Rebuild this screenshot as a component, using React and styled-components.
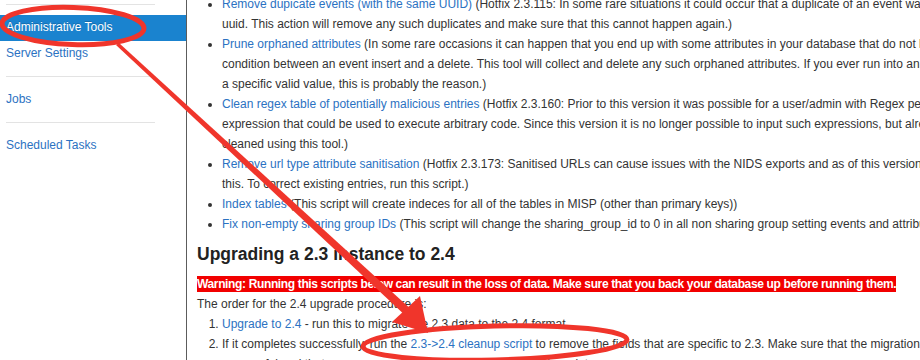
import React from "react"
import styled, { createGlobalStyle } from "styled-components"

const GlobalStyle = createGlobalStyle`
  html, body {
    margin: 0;
    padding: 0;
    background: #fff;
  }
  body {
    font-family: "Liberation Sans", Arial, Helvetica, sans-serif;
    font-size: 12px;
    line-height: 20px;
    color: #333;
  }
`

const Page = styled.div`
  position: relative;
  width: 920px;
  height: 360px;
  overflow: hidden;
  display: flex;
`

const Sidebar = styled.nav`
  flex: 0 0 186px;
  border-right: 1px solid #5c5c5c;
  padding-top: 4px;
`

const Divider = styled.div`
  height: 1px;
  background: #e3e3e3;
  margin: 10px 31px 10px 6px;
  &:first-child {
    margin-top: 0;
  }
`

const NavItem = styled.a`
  display: block;
  padding: 4px 6px ${(p) => (p.$active ? "5px" : "4px")};
  line-height: 17px;
  font-size: 12px;
  text-decoration: none;
  color: ${(p) => (p.$active ? "#fff" : "#2b72c2")};
  background: ${(p) => (p.$active ? "#1a83cf" : "transparent")};
  text-shadow: ${(p) => (p.$active ? "0 -1px 0 rgba(0,0,0,0.2)" : "none")};
`

const Content = styled.main`
  flex: 1;
  min-width: 0;
  padding-left: 10px;
  white-space: nowrap;
  overflow: hidden;
`

const ToolList = styled.ul`
  margin: -6px 0 10px 25px;
  padding: 0;
  list-style: disc;
`

const Link = styled.a`
  color: #2b72c2;
  text-decoration: none;
`

const Heading = styled.h3`
  margin: 0 0 10px;
  font-size: 17.5px;
  line-height: 20px;
  font-weight: bold;
  color: #222;
`

const Notice = styled.p`
  margin: 0;
`

const Warning = styled.span`
  background: #f20000;
  color: #fff;
  font-weight: bold;
  letter-spacing: -0.36px;
  padding: 1px 0;
`

const Steps = styled.ol`
  margin: 0 0 10px 25px;
  padding: 0;
`

const Overlay = styled.svg`
  position: absolute;
  left: 0;
  top: 0;
  pointer-events: none;
`

function Annotations() {
  return (
    <Overlay width="920" height="360" viewBox="0 0 920 360">
      <g fill="none" stroke="#f0352b" strokeWidth="5" strokeLinecap="round">
        <ellipse cx="73" cy="26" rx="71" ry="18.5" transform="rotate(2 73 26)" />
        <ellipse cx="495" cy="343" rx="132" ry="17" transform="rotate(-1.5 495 343)" />
      </g>
      <path d="M116 45 L119 43 L414 312 L408 318 Z" fill="#f0352b" />
      <path d="M428 333 L392 322 L420 296 Z" fill="#f0352b" />
    </Overlay>
  )
}

export default function App() {
  return (
    <>
      <GlobalStyle />
      <Page>
        <Sidebar>
          <Divider />
          <NavItem $active>Administrative Tools</NavItem>
          <NavItem>Server Settings</NavItem>
          <Divider />
          <NavItem>Jobs</NavItem>
          <Divider />
          <NavItem>Scheduled Tasks</NavItem>
        </Sidebar>
        <Content>
          <ToolList>
            <li>
              <Link>Remove dupicate events (with the same UUID)</Link> (Hotfix 2.3.115: In some rare
              situations it could occur that a duplicate of an event was created with an exact copy of the
              <br />
              uuid. This action will remove any such duplicates and make sure that this cannot happen again.)
            </li>
            <li>
              <Link>Prune orphaned attributes</Link> (In some rare occasions it can happen that you end up
              with some attributes in your database that do not belong to an event - for example during a race
              <br />
              condition between an event insert and a delete. This tool will collect and delete any such
              orphaned attributes. If you ever run into an issue where you cannot add an attribute with
              <br />
              a specific valid value, this is probably the reason.)
            </li>
            <li>
              <Link>Clean regex table of potentially malicious entries</Link> (Hotfix 2.3.160: Prior to
              this version it was possible for a user/admin with Regex permission to create a malicious regular
              <br />
              expression that could be used to execute arbitrary code. Since this version it is no longer
              possible to input such expressions, but already existing malicious entries still have to be
              <br />
              cleaned using this tool.)
            </li>
            <li>
              <Link>Remove url type attribute sanitisation</Link> (Hotfix 2.3.173: Sanitised URLs can cause
              issues with the NIDS exports and as of this version attributes will be modified on entry to correct
              <br />
              this. To correct existing entries, run this script.)
            </li>
            <li>
              <Link>Index tables</Link> (This script will create indeces for all of the tables in MISP (other
              than primary keys))
            </li>
            <li>
              <Link>Fix non-empty sharing group IDs</Link> (This script will change the sharing_group_id to 0
              in all non sharing group setting events and attributes.)
            </li>
          </ToolList>
          <Heading>Upgrading a 2.3 instance to 2.4</Heading>
          <Notice>
            <Warning>
              Warning: Running this scripts below can result in the loss of data. Make sure that you back your
              database up before running them.
            </Warning>
            <br />
            The order for the 2.4 upgrade procedure is:
          </Notice>
          <Steps>
            <li>
              <Link>Upgrade to 2.4</Link> - run this to migrate the 2.3 data to the 2.4 format
            </li>
            <li>
              If it completes successfully, run the <Link>2.3-&gt;2.4 cleanup script</Link> to remove the
              fields that are specific to 2.3. Make sure that the migration of the data to the 2.4 format was
              <br />
              successful and that no errors were reported before running this script.
            </li>
          </Steps>
        </Content>
        <Annotations />
      </Page>
    </>
  )
}
